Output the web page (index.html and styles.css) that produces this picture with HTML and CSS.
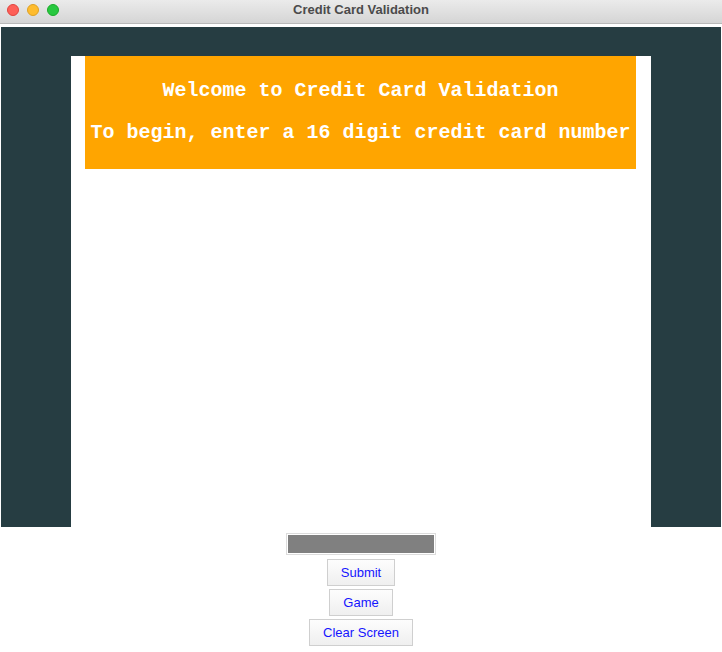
FILE: index.html
```html
<!DOCTYPE html>
<html lang="en">
<head>
<meta charset="utf-8">
<title>Credit Card Validation</title>
<link rel="stylesheet" href="styles.css">
</head>
<body>
  <header class="titlebar">
    <div class="lights">
      <span class="light red"></span>
      <span class="light yellow"></span>
      <span class="light green"></span>
    </div>
    <div class="title">Credit Card Validation</div>
  </header>

  <main class="stage">
    <section class="canvas">
      <div class="banner">
        <p class="banner-line">Welcome to Credit Card Validation</p>
        <p class="banner-line">To begin, enter a 16 digit credit card number</p>
      </div>
    </section>
  </main>

  <div class="controls">
    <input class="card-input" type="text" aria-label="Card number">
    <button class="btn" type="button">Submit</button>
    <button class="btn" type="button">Game</button>
    <button class="btn" type="button">Clear Screen</button>
  </div>
</body>
</html>
```

FILE: styles.css
```css
html, body {
  margin: 0;
  padding: 0;
  background: #ffffff;
}

body {
  width: 722px;
  height: 652px;
  overflow: hidden;
  font-family: "Liberation Sans", Arial, sans-serif;
}

/* window chrome */
.titlebar {
  position: relative;
  height: 23px;
  border-bottom: 1px solid #b9b9b9;
  background: linear-gradient(#ebebeb, #d5d5d5);
  display: flex;
  align-items: center;
  justify-content: center;
  box-sizing: content-box;
}

.lights {
  position: absolute;
  left: 7px;
  top: 4px;
  display: flex;
  gap: 8px;
}

.light {
  width: 12px;
  height: 12px;
  border-radius: 50%;
  box-sizing: border-box;
}

.light.red { background: #fe5f57; border: 1px solid #e0443e; }
.light.yellow { background: #febc2e; border: 1px solid #dea123; }
.light.green { background: #28c840; border: 1px solid #1aab29; }

.title {
  font-size: 13px;
  font-weight: bold;
  color: #4b4b4b;
  margin-bottom: 4px;
}

/* drawing area */
.stage {
  margin: 3px 1px 0;
  height: 500px;
  background: #263d42;
  padding: 29px 70px 0;
  box-sizing: border-box;
}

.canvas {
  width: 580px;
  height: 471px;
  background: #ffffff;
  padding: 0 15px 0 14px;
  box-sizing: border-box;
}

.banner {
  height: 113px;
  background: #ffa500;
  color: #ffffff;
  font-family: "Liberation Mono", "Courier New", monospace;
  font-weight: bold;
  font-size: 20px;
  text-align: center;
  padding-top: 24px;
  box-sizing: border-box;
}

.banner-line {
  margin: 0;
  line-height: 22px;
  white-space: nowrap;
}

.banner-line + .banner-line {
  margin-top: 20px;
}

/* input and buttons */
.controls {
  display: flex;
  flex-direction: column;
  align-items: center;
  gap: 3px;
  padding-top: 6px;
}

.card-input {
  width: 150px;
  height: 22px;
  box-sizing: border-box;
  margin: 0 0 1px;
  border: 1px solid #dcdcdc;
  box-shadow: inset 0 0 0 1px #ffffff;
  background: #808080;
  padding: 0;
  outline: none;
}

.btn {
  height: 27px;
  box-sizing: border-box;
  padding: 0 13px;
  border: 1px solid #cfcfcf;
  border-radius: 0;
  background: linear-gradient(#fdfdfd, #efefef);
  color: #1515ff;
  font-family: "Liberation Sans", Arial, sans-serif;
  font-size: 13px;
  line-height: 25px;
}
```
